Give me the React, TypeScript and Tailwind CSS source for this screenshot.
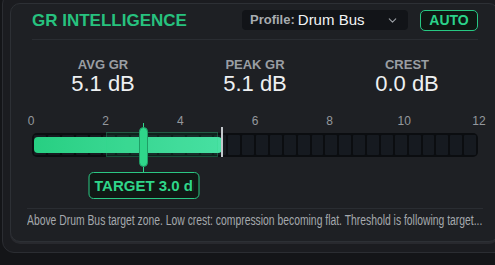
import { ChevronDown } from 'lucide-react';

const SCALE = [0, 2, 4, 6, 8, 10, 12];
const MAX = 12;
const avgGr = 5.1;
const target = 3.0;
const zone = [2, 5];

function Stat({ label, value }: { label: string; value: string }) {
  return (
    <div className="flex flex-col items-center">
      <div className="text-[13px] leading-[14px] font-bold text-[#9a9ea3]">{label}</div>
      <div className="text-[22px] leading-[24px] text-[#eef0f2]">{value}</div>
    </div>
  );
}

export default function App() {
  const pct = (v: number) => `${(v / MAX) * 100}%`;

  return (
    <div className="w-[495px] h-[265px] overflow-hidden bg-[#141518] font-['Liberation_Sans',Arial,sans-serif]">
      {/* Outer frame */}
      <div className="ml-[2px] mt-[-8px] w-[506px] h-[261px] rounded-[12px] border border-[#2b2d32] bg-[#1b1c20] pl-[7px] pt-[10px]">
        {/* Inner panel */}
        <div className="w-[489px] h-[239px] rounded-[10px] border border-[#2d3035] bg-[#1e2024] shadow-[0_2px_0_0_#28292e] pl-[21px] pr-[20px]">
          {/* Header */}
          <div className="flex items-center h-[36px] pb-[3px] border-b border-[#2a2d32]">
            <div className="text-[17px] leading-none font-bold text-[#27c27f]">GR INTELLIGENCE</div>
            <div className="ml-auto flex items-center w-[166px] h-[20px] rounded-[4px] bg-[#121418] pl-[8px] pr-[9px]">
              <span className="text-[13px] font-bold text-[#a7abb0]">Profile:</span>
              <span className="ml-[3px] text-[15px] text-[#f2f4f6]">Drum Bus</span>
              <ChevronDown className="ml-auto text-[#9ca0a5]" size={13} strokeWidth={2} />
            </div>
            <div className="ml-[12px] flex items-center justify-center w-[58px] h-[21px] rounded-[5px] border-[1.5px] border-[#27c883] bg-[#0f1713] text-[14px] font-bold text-[#2bd38a]">
              AUTO
            </div>
          </div>

          {/* Stats */}
          <div className="grid grid-cols-3 -mx-[5px] pt-[18px]">
            <Stat label="AVG GR" value="5.1 dB" />
            <Stat label="PEAK GR" value="5.1 dB" />
            <Stat label="CREST" value="0.0 dB" />
          </div>

          {/* Scale */}
          <div className="flex justify-between -mx-[1px] mt-[18px] h-[14px]">
            {SCALE.map((n) => (
              <div key={n} className="w-0 flex justify-center">
                <span className="text-[12px] leading-[14px] text-[#94989d]">{n}</span>
              </div>
            ))}
          </div>

          {/* Meter */}
          <div className="relative mt-[5px] h-[24px] rounded-[5px] bg-[#0b0d10] p-[2px] flex gap-[2px]">
            {Array.from({ length: 32 }).map((_, i) => (
              <div key={i} className="flex-1 rounded-[1px] bg-[#161a20]" />
            ))}
            {/* Fill */}
            <div
              className="absolute left-[2px] top-[4px] bottom-[4px] rounded-[4px] bg-gradient-to-r from-[#27cf82] to-[#4ae1a5]"
              style={{ width: `calc(${pct(avgGr)} - 2px)` }}
            />
            {/* Target zone */}
            <div
              className="absolute top-[-1px] bottom-0 border border-[#2fd68a]/25 bg-[#2fd68a]/10"
              style={{ left: pct(zone[0]), width: pct(zone[1] - zone[0]) }}
            />
            {/* Current marker */}
            <div
              className="absolute top-[-6px] bottom-0 w-[2px] -ml-[1px] bg-[#c3c7cb]"
              style={{ left: pct(avgGr) }}
            />
            {/* Target thumb */}
            <div className="absolute top-[-10px] w-0" style={{ left: pct(target) }}>
              <div className="absolute left-[-0.5px] top-0 w-[1px] h-[5px] bg-[#2fd68a]" />
              <div className="absolute left-[-4.5px] top-[4px] w-[9px] h-[40px] rounded-full bg-[#2fd68a] border border-[#1f9e66]" />
              <div className="absolute left-[-0.5px] top-[44px] w-[1px] h-[5px] bg-[#2fd68a]" />
            </div>
          </div>

          {/* Target label */}
          <div className="relative h-[51px]">
            <div
              className="absolute top-[15px] -translate-x-1/2 flex items-center w-[111px] h-[27px] rounded-[5px] border border-[#2bc883] bg-[#111815] pl-[5px]"
              style={{ left: pct(target) }}
            >
              <span className="block w-[99px] overflow-hidden whitespace-nowrap text-[15px] leading-[18px] font-bold text-[#2fd68a]">
                TARGET 3.0 dB
              </span>
            </div>
          </div>

          {/* Status */}
          <div className="-mx-[5px] border-t border-[#2a2d32] pt-[3px]">
            <div className="whitespace-nowrap origin-left scale-x-[0.74] text-[14px] leading-[16px] text-[#a5a9ad]">
              Above Drum Bus target zone. Low crest: compression becoming flat. Threshold is following target...
            </div>
          </div>
        </div>
      </div>
    </div>
  );
}
